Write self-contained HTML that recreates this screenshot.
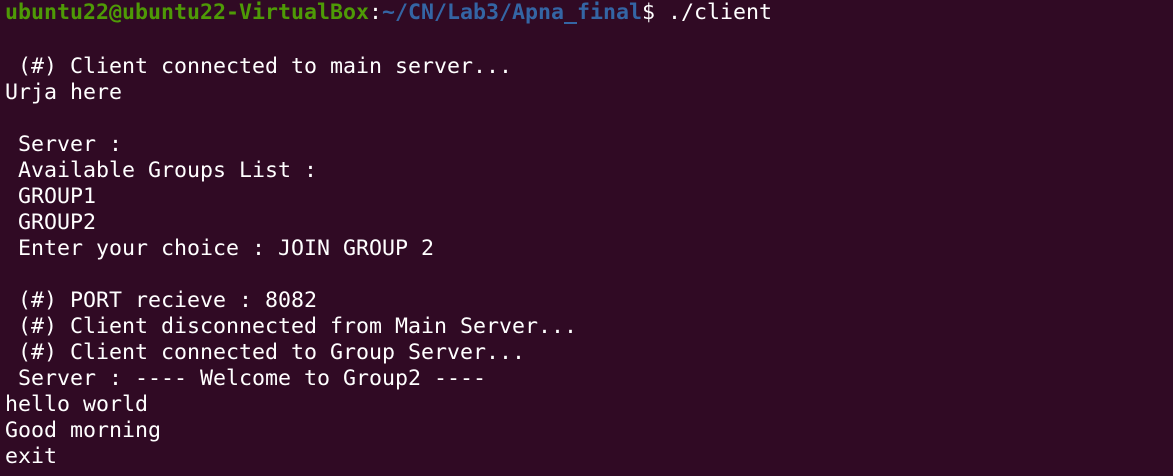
<!DOCTYPE html>
<html><head><style>
html,body{margin:0;padding:0;background:#300a24;width:1173px;height:476px;overflow:hidden}
pre{margin:0;padding:2px 0 0 5px;font-family:"DejaVu Sans Mono","Liberation Mono",monospace;font-size:21.6px;line-height:26px;color:#ffffff;}
.g{color:#4e9a06;font-weight:bold}.b{color:#3465a4;font-weight:bold}
.f{position:relative;top:-2px}
</style></head><body><pre><span class="f"><span class="g">ubuntu22@ubuntu22-VirtualBox</span>:<span class="b">~/CN/Lab3/Apna_final</span>$ ./client</span>

 (#) Client connected to main server...
Urja here

 Server : 
 Available Groups List :
 GROUP1
 GROUP2
 Enter your choice : JOIN GROUP 2

 (#) PORT recieve : 8082
 (#) Client disconnected from Main Server...
 (#) Client connected to Group Server...
 Server : ---- Welcome to Group2 ----
hello world
Good morning
exit</pre></body></html>
